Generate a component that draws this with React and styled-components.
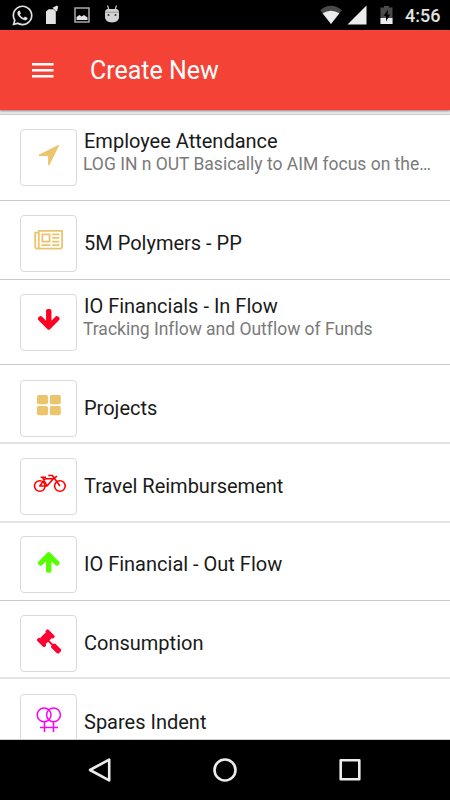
import React from 'react';
import styled, { createGlobalStyle, css } from 'styled-components';
import { FaWhatsapp } from 'react-icons/fa';

const GlobalStyle = createGlobalStyle`
  body {
    margin: 0;
    background: #fff;
  }
`;

// --- Styled Components ---
const Screen = styled.div`
  display: flex;
  flex-direction: column;
  width: 450px;
  height: 800px;
  overflow: hidden;
  background: #fff;
  font-family: Roboto, 'Noto Sans', sans-serif;
`;

const StatusBar = styled.div`
  display: flex;
  flex: none;
  align-items: center;
  justify-content: space-between;
  height: 30px;
  box-sizing: border-box;
  padding: 0 10px 0 11px;
  background: #000;
  color: #e2e2e2;
`;

const StatusGroup = styled.div`
  display: flex;
  align-items: center;
  height: 30px;

  svg {
    display: block;
  }
`;

const StatusIcon = styled.svg`
  width: ${({ $w }) => $w}px;
  height: 30px;
  margin-left: ${({ $gap }) => $gap}px;
`;

const Clock = styled.span`
  width: 35px;
  margin-left: 11px;
  padding-top: 1px;
  font-size: 18px;
  font-weight: 500;
  line-height: 30px;
  white-space: nowrap;
`;

const AppBar = styled.header`
  position: relative;
  display: flex;
  flex: none;
  align-items: center;
  height: 80px;
  padding-left: 32px;
  background: #f44336;
  box-shadow: 0 1px 2px rgba(60, 20, 20, 0.5);
`;

const MenuIcon = styled.svg`
  width: 22px;
  height: 16px;
`;

const AppTitle = styled.h1`
  margin: 0 0 0 36px;
  padding-top: 1px;
  color: #fff;
  font-size: 25px;
  font-weight: 400;
  line-height: 79px;
`;

const List = styled.main`
  flex: 1;
  overflow: hidden;
  border-bottom: 1px solid #d0d0d0;
`;

const ListEdge = styled.div`
  height: 4px;
  background: #ebe9eb;
  border-bottom: 1px solid #ccc;
`;

const Row = styled.div`
  display: flex;
  align-items: flex-start;
  box-sizing: border-box;
  height: ${({ $height }) => $height}px;
  padding: ${({ $top }) => $top}px 0 0 20px;
  border-bottom: 1px solid #c9c9c9;

  ${({ $soft }) => $soft && css`
    border-bottom: 2px solid #e2e2e2;
  `}
`;

const IconBox = styled.div`
  flex: none;
  box-sizing: border-box;
  width: 57px;
  height: 57px;
  border: 1px solid #dadada;
  border-radius: 4px;

  svg {
    display: block;
    margin: -1px;
    width: 57px;
    height: 57px;
    fill: ${({ $color }) => $color};
    stroke: none;
  }

  svg .line {
    fill: none;
    stroke: ${({ $color }) => $color};
  }
`;

const RowText = styled.div`
  display: flex;
  flex-direction: column;
  box-sizing: border-box;
  height: 57px;
  padding-left: 6px;
  padding-top: ${({ $double }) => ($double ? 1 : 17)}px;
`;

const RowTitle = styled.div`
  padding-left: 1px;
  color: #1a1a1a;
  font-size: 20px;
  line-height: 23px;
  white-space: nowrap;
`;

const RowSubtitle = styled.div`
  color: #7a7a7a;
  font-size: 17.5px;
  line-height: 23px;
  letter-spacing: -0.01px;
  white-space: nowrap;
`;

const NavBar = styled.nav`
  display: flex;
  flex: none;
  align-items: center;
  justify-content: center;
  gap: 101px;
  height: 60px;
  background: #000;

  svg {
    width: 24px;
    height: 24px;
    fill: none;
    stroke: #ececec;
    stroke-width: 2.6;
    stroke-linejoin: round;
  }
`;

// --- Icons, all drawn on the 57px box ---
const icons = {
  location: (
    <path d="M39 16.8 29.4 36q-.3.5-.8.4t-.5-.7v-8.8h-8.6q-.6 0-.7-.5t.4-.8l19.1-9.5q.5-.2.8.1t-.1.6z" />
  ),
  newspaper: (
    <path
      transform="translate(14.3 13.1) scale(.014)"
      d="M1024 512h-384v384h384v-384zM1152 1152v128h-640v-128h640zM1152 384v640h-640v-640h640zM1792 1152v128h-512v-128h512zM1792 896v128h-512v-128h512zM1792 640v128h-512v-128h512zM1792 384v128h-512v-128h512zM256 1344v-960h-128v960q0 26 19 45t45 19 45-19 19-45zM1920 1344v-1088h-1536v1088q0 33-11 64h1483q26 0 45-19t19-45zM2048 128v1216q0 80-56 136t-136 56h-1664q-80 0-136-56t-56-136v-1088h256v-128h1792z"
    />
  ),
  arrowDown: (
    <path
      transform="translate(16.2 13.2) scale(.014)"
      d="M1675 832q0 53-37 90l-651 652q-39 37-91 37-53 0-90-37l-651-652q-38-36-38-90 0-53 38-91l74-75q39-37 91-37 53 0 90 37l294 294v-704q0-52 38-90t90-38h128q52 0 90 38t38 90v704l294-294q37-37 90-37 52 0 91 37l75 75q37 39 37 91z"
    />
  ),
  grid: (
    <>
      <rect x="17" y="15" width="11" height="9.2" rx="1.8" />
      <rect x="29.8" y="15" width="11" height="9.2" rx="1.8" />
      <rect x="17" y="26" width="11" height="9.2" rx="1.8" />
      <rect x="29.8" y="26" width="11" height="9.2" rx="1.8" />
    </>
  ),
  bicycle: (
    <g className="line" strokeWidth="1.6" strokeLinejoin="round">
      <circle cx="19.8" cy="28" r="5.3" />
      <circle cx="39.9" cy="28" r="5.3" />
      <path d="M19.8 28l5.2-7.2h8.4L27 28zM27 28l-4.6-8.8M20.6 19.2h5.4M28.2 17.500h4.200l7.500 10.500M33.4 20.8l3.6-2.6" />
    </g>
  ),
  arrowUp: (
    <path
      transform="translate(16.2 13.4) scale(.014)"
      d="M1675 971q0 51-37 90l-75 75q-38 38-91 38-54 0-90-38l-294-293v704q0 52-37.5 84.5t-90.5 32.5h-128q-53 0-90.5-32.5t-37.5-84.5v-704l-294 293q-36 38-90 38t-90-38l-75-75q-38-38-38-90 0-53 38-91l651-651q35-37 90-37 54 0 91 37l651 651q37 39 37 91z"
    />
  ),
  gavel: (
    <path
      transform="translate(16.4 13.8) scale(.014)"
      d="M1771 1536q0 53-37 90l-107 108q-39 37-91 37-53 0-90-37l-363-364q-38-36-38-90 0-53 43-96l-256-256-126 126q-14 14-34 14t-34-14q2 2 12.5 12t12.5 13 10 11.5 10 13.5 6 13.5 5.5 16.5 1.5 18q0 38-28 68-3 3-16.5 18t-19 20.5-18.5 16.5-22 15.5-22 9-26 4.5q-40 0-68-28l-408-408q-28-28-28-68 0-13 4.5-26t9-22 15.5-22 16.5-18.5 20.5-19 18-16.5q30-28 68-28 10 0 18 1.5t16.5 5.5 13.5 6 13.5 10 11.5 10 13 12.5 12 12.5q-14-14-14-34t14-34l348-348q14-14 34-14t34 14q-2-2-12.5-12t-12.5-13-10-11.5-10-13.5-6-13.5-5.5-16.5-1.5-18q0-38 28-68 3-3 16.5-18t19-20.5 18.5-16.5 22-15.5 22-9 26-4.5q40 0 68 28l408 408q28 28 28 68 0 13-4.5 26t-9 22-15.5 22-16.5 18.5-20.5 19-18 16.5q-30 28-68 28-10 0-18-1.5t-16.5-5.5-13.5-6-13.5-10-11.5-10-13-12.5-12-12.5q14 14 14 34t-14 34l-126 126 256 256q43-43 96-43 52 0 91 37l363 363q37 39 37 91z"
    />
  ),
  venusDouble: (
    <g className="line" strokeWidth="1.5">
      <circle cx="24.1" cy="20.9" r="6.9" />
      <circle cx="33.5" cy="20.9" r="6.9" />
      <path d="M24.5 27.9v10.200M33.5 27.9v10.200M20 33.6h18" />
    </g>
  ),
};

const rows = [
  { icon: 'location', color: '#ecc46c', title: 'Employee Attendance', subtitle: 'LOG IN n OUT Basically to AIM focus on the…', height: 86, top: 14 },
  { icon: 'newspaper', color: '#ecc46c', title: '5M Polymers - PP', height: 79, top: 14 },
  { icon: 'arrowDown', color: '#ff0022', title: 'IO Financials - In Flow', subtitle: 'Tracking Inflow and Outflow of Funds', height: 85, top: 14 },
  { icon: 'grid', color: '#ecc46c', title: 'Projects', height: 79, top: 15, soft: true },
  { icon: 'bicycle', color: '#ff0000', title: 'Travel Reimbursement', height: 79, top: 14, soft: true },
  { icon: 'arrowUp', color: '#55ff00', title: 'IO Financial - Out Flow', height: 78, top: 13 },
  { icon: 'gavel', color: '#ff0030', title: 'Consumption', height: 78, top: 14, soft: true },
  { icon: 'venusDouble', color: '#ff00ff', title: 'Spares Indent', height: 79, top: 15 },
];

// --- Components ---
const ListRow = ({ item }) => (
  <Row $height={item.height} $top={item.top} $soft={item.soft}>
    <IconBox $color={item.color}>
      <svg viewBox="0 0 57 57">{icons[item.icon]}</svg>
    </IconBox>
    <RowText $double={!!item.subtitle}>
      <RowTitle>{item.title}</RowTitle>
      {item.subtitle && <RowSubtitle>{item.subtitle}</RowSubtitle>}
    </RowText>
  </Row>
);

const SystemStatus = () => (
  <StatusBar>
    <StatusGroup>
      <FaWhatsapp size={23} />
      <StatusIcon $w={14} $gap={11} viewBox="0 0 14 30" fill="#e2e2e2">
        <path d="M1 11.5 3.5 9.3h5l2.3 2.200V24H1z" />
        <path d="M7.5 7.8 12 5.5l1.2 1.2L12 11.5l-2-1.2z" />
      </StatusIcon>
      <StatusIcon $w={16} $gap={15} viewBox="0 0 16 30">
        <path d="M1 8h14v14H1z" fill="none" stroke="#a9a9a9" strokeWidth="1.5" />
        <path d="M2.5 20v-3l3-2 2 1.5 2.5-1.5 3.5 2.5V20z" fill="#e2e2e2" />
      </StatusIcon>
      <StatusIcon $w={16} $gap={14} viewBox="0 0 16 30">
        <path d="M3.5 5.5 5 10M12.5 5.5 11 10" stroke="#c8c8c8" strokeWidth="1.2" />
        <path d="M1 12.5Q1 9 4 9h8q3 0 3 3.5V17q0 5-7 5.5Q1 22 1 17z" fill="#d2d2d2" />
        <path d="M1 12.2h14" stroke="#999" />
        <circle cx="4.5" cy="15" r="1" fill="#333" />
        <circle cx="11.5" cy="15" r="1" fill="#333" />
      </StatusIcon>
    </StatusGroup>
    <StatusGroup>
      <StatusIcon $w={22} $gap={0} viewBox="0 0 22 30">
        <path d="M11 24 .2 10.2Q11 1.5 21.8 10.2z" fill="#4a4a4a" />
        <path d="M11 24 2.6 13.3Q11 8 19.4 13.3z" fill="#ececec" />
      </StatusIcon>
      <StatusIcon $w={20} $gap={5} viewBox="0 0 20 30">
        <path d="M19.5 5.5v19H.5z" fill="#ececec" />
      </StatusIcon>
      <StatusIcon $w={14} $gap={13} viewBox="0 0 14 30">
        <path d="M.5 7.5H4V6h5v1.5h3.5V24H.5z" fill="#4a4a4a" />
        <path d="M.5 18h12v6H.5z" fill="#ececec" />
        <path d="M8 9.5 3.500 16H6v5.5l4.200-7H7.5z" fill="#000" />
      </StatusIcon>
      <Clock>4:56</Clock>
    </StatusGroup>
  </StatusBar>
);

export default function App() {
  return (
    <>
      <GlobalStyle />
      <Screen>
        <SystemStatus />
        <AppBar>
          <MenuIcon viewBox="0 0 22 16" stroke="#fff" strokeWidth="2.4">
            <path d="M0 2.2h21.5M0 8.2h21.5M0 14.2h21.5" />
          </MenuIcon>
          <AppTitle>Create New</AppTitle>
        </AppBar>
        <List>
          <ListEdge />
          {rows.map((item) => <ListRow key={item.title} item={item} />)}
        </List>
        <NavBar>
          <svg viewBox="0 0 24 24"><path d="M21.2 1.6v20.8L2 12z" /></svg>
          <svg viewBox="0 0 24 24"><circle cx="12" cy="12" r="10.5" /></svg>
          <svg viewBox="0 0 24 24"><path d="M2.7 2.3h18.6v19H2.7z" /></svg>
        </NavBar>
      </Screen>
    </>
  );
}
